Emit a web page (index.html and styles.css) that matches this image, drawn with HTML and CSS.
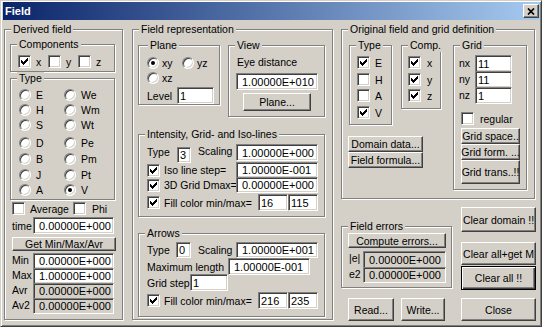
FILE: index.html
```html
<!DOCTYPE html>
<html lang="en">
<head>
<meta charset="utf-8">
<title>Field</title>
<link rel="stylesheet" href="styles.css">
</head>
<body>
<div class="window">
  <div class="titlebar">
    <span class="title">Field</span>
    <span class="closebox"><svg viewBox="0 0 8 7" width="8" height="7"><path d="M1 0.5L7 6.5M7 0.5L1 6.5" stroke="#000" stroke-width="1.7"/></svg></span>
  </div>

  <div class="client">

    <!-- derived field -->
    <div class="grp derived">
      <span class="cap">Derived field</span>
      <div class="grp comps">
        <span class="cap">Components</span>
        <div class="comprow">
          <span class="opt"><span class="cb"><svg viewBox="0 0 7 7" width="7" height="7"><path d="M0 2V5H1V6H2V7H3V6H4V5H5V4H6V3H7V0H6V1H5V2H4V3H3V4H2V3H1V2Z"/></svg></span>x</span>
          <span class="opt"><span class="cb"></span>y</span>
          <span class="opt"><span class="cb"></span>z</span>
        </div>
      </div>
      <div class="grp dtype">
        <span class="cap">Type</span>
        <div class="radiogrid">
          <span class="opt"><span class="rb"></span>E</span>
          <span class="opt"><span class="rb"></span>We</span>
          <span class="opt"><span class="rb"></span>H</span>
          <span class="opt"><span class="rb"></span>Wm</span>
          <span class="opt"><span class="rb"></span>S</span>
          <span class="opt"><span class="rb"></span>Wt</span>
          <span class="opt"><span class="rb"></span>D</span>
          <span class="opt"><span class="rb"></span>Pe</span>
          <span class="opt"><span class="rb"></span>B</span>
          <span class="opt"><span class="rb"></span>Pm</span>
          <span class="opt"><span class="rb"></span>J</span>
          <span class="opt"><span class="rb"></span>Pt</span>
          <span class="opt"><span class="rb"></span>A</span>
          <span class="opt"><span class="rb on"></span>V</span>
        </div>
      </div>
      <div class="avgrow">
        <span class="opt avg"><span class="cb"></span>Average</span>
        <span class="opt phi"><span class="cb"></span>Phi</span>
      </div>
      <div class="vrow time"><span class="vlbl">time</span><span class="edit num dval">0.00000E+000</span></div>
      <button class="btn getmin">Get Min/Max/Avr</button>
      <div class="vrow stat first"><span class="vlbl">Min</span><span class="edit num dval">0.00000E+000</span></div>
      <div class="vrow stat"><span class="vlbl">Max</span><span class="edit num dval">1.00000E+000</span></div>
      <div class="vrow stat"><span class="vlbl">Avr</span><span class="edit num dval ro">0.00000E+000</span></div>
      <div class="vrow stat"><span class="vlbl">Av2</span><span class="edit num dval ro">0.00000E+000</span></div>
    </div>

    <!-- field representation -->
    <div class="grp rep">
      <span class="cap">Field representation</span>
      <div class="reptop">
        <div class="grp plane">
          <span class="cap wide">Plane</span>
          <div class="prow first">
            <span class="opt pl1"><span class="rb on"></span>xy</span>
            <span class="opt"><span class="rb"></span>yz</span>
          </div>
          <div class="prow">
            <span class="opt"><span class="rb"></span>xz</span>
          </div>
          <div class="prow level">
            <span class="lvl">Level</span><span class="edit lvlval">1</span>
          </div>
        </div>
        <div class="grp view">
          <span class="cap">View</span>
          <div class="eyelbl">Eye distance</div>
          <span class="edit num eyeval">1.00000E+010</span>
          <button class="btn planebtn">Plane...</button>
        </div>
      </div>

      <div class="grp intens">
        <span class="cap">Intensity, Grid- and Iso-lines</span>
        <div class="irow typerow">
          <span class="tlbl">Type</span><span class="edit tval">3</span>
          <span class="slbl">Scaling</span><span class="edit num wval h17">1.00000E+000</span>
        </div>
        <div class="irow iso">
          <span class="cb"><svg viewBox="0 0 7 7" width="7" height="7"><path d="M0 2V5H1V6H2V7H3V6H4V5H5V4H6V3H7V0H6V1H5V2H4V3H3V4H2V3H1V2Z"/></svg></span>
          <span class="clbl">Iso line step=</span><span class="edit num wval">1.00000E-001</span>
        </div>
        <div class="irow grid3d">
          <span class="cb"><svg viewBox="0 0 7 7" width="7" height="7"><path d="M0 2V5H1V6H2V7H3V6H4V5H5V4H6V3H7V0H6V1H5V2H4V3H3V4H2V3H1V2Z"/></svg></span>
          <span class="clbl">3D Grid Dmax=</span><span class="edit num wval">0.00000E+000</span>
        </div>
        <div class="irow fill">
          <span class="cb"><svg viewBox="0 0 7 7" width="7" height="7"><path d="M0 2V5H1V6H2V7H3V6H4V5H5V4H6V3H7V0H6V1H5V2H4V3H3V4H2V3H1V2Z"/></svg></span>
          <span class="clbl flbl">Fill color min/max=</span><span class="edit cval">16</span><span class="edit cval">115</span>
        </div>
      </div>

      <div class="grp arrows">
        <span class="cap">Arrows</span>
        <div class="irow atype">
          <span class="tlbl">Type</span><span class="edit tval">0</span>
          <span class="slbl">Scaling</span><span class="edit num wval">1.00000E+001</span>
        </div>
        <div class="irow maxlen">
          <span class="mlbl">Maximum length</span><span class="edit num wval h17">1.00000E-001</span>
        </div>
        <div class="irow gstep">
          <span class="glbl">Grid step</span><span class="edit gval">1</span>
        </div>
        <div class="irow fill afill">
          <span class="cb"><svg viewBox="0 0 7 7" width="7" height="7"><path d="M0 2V5H1V6H2V7H3V6H4V5H5V4H6V3H7V0H6V1H5V2H4V3H3V4H2V3H1V2Z"/></svg></span>
          <span class="clbl flbl">Fill color min/max=</span><span class="edit cval">216</span><span class="edit cval">235</span>
        </div>
      </div>
    </div>

    <!-- original field, errors and buttons -->
    <div class="col3">
      <div class="grp orig">
        <span class="cap">Original field and grid definition</span>
        <div class="origrow">
          <div class="origleft">
            <div class="boxes">
              <div class="grp otype">
                <span class="cap">Type</span>
                <div class="cklist">
                  <span class="opt"><span class="cb"><svg viewBox="0 0 7 7" width="7" height="7"><path d="M0 2V5H1V6H2V7H3V6H4V5H5V4H6V3H7V0H6V1H5V2H4V3H3V4H2V3H1V2Z"/></svg></span>E</span>
                  <span class="opt"><span class="cb"></span>H</span>
                  <span class="opt"><span class="cb"></span>A</span>
                  <span class="opt"><span class="cb"><svg viewBox="0 0 7 7" width="7" height="7"><path d="M0 2V5H1V6H2V7H3V6H4V5H5V4H6V3H7V0H6V1H5V2H4V3H3V4H2V3H1V2Z"/></svg></span>V</span>
                </div>
              </div>
              <div class="grp ocomp">
                <span class="cap">Comp.</span>
                <div class="cklist comp">
                  <span class="opt"><span class="cb"><svg viewBox="0 0 7 7" width="7" height="7"><path d="M0 2V5H1V6H2V7H3V6H4V5H5V4H6V3H7V0H6V1H5V2H4V3H3V4H2V3H1V2Z"/></svg></span>x</span>
                  <span class="opt"><span class="cb"><svg viewBox="0 0 7 7" width="7" height="7"><path d="M0 2V5H1V6H2V7H3V6H4V5H5V4H6V3H7V0H6V1H5V2H4V3H3V4H2V3H1V2Z"/></svg></span>y</span>
                  <span class="opt"><span class="cb"><svg viewBox="0 0 7 7" width="7" height="7"><path d="M0 2V5H1V6H2V7H3V6H4V5H5V4H6V3H7V0H6V1H5V2H4V3H3V4H2V3H1V2Z"/></svg></span>z</span>
                </div>
              </div>
            </div>
            <button class="btn domain">Domain data...</button>
            <button class="btn formula">Field formula...</button>
          </div>
          <div class="grp ogrid">
            <span class="cap">Grid</span>
            <div class="nrow first"><span class="nlbl">nx</span><span class="edit nval">11</span></div>
            <div class="nrow"><span class="nlbl">ny</span><span class="edit nval">11</span></div>
            <div class="nrow"><span class="nlbl">nz</span><span class="edit nval">1</span></div>
            <div class="opt regular"><span class="cb"></span>regular</div>
            <button class="btn gbtn gspace">Grid space..</button>
            <button class="btn gbtn">Grid form. ...</button>
            <button class="btn gbtn gtrans">Grid trans..!!</button>
          </div>
        </div>
      </div>

      <div class="lower">
        <div class="errcol">
          <div class="grp errs">
            <span class="cap">Field errors</span>
            <button class="btn compute">Compute errors...</button>
            <div class="erow first"><span class="elbl">|e|</span><span class="edit num ro eval h17">0.00000E+000</span></div>
            <div class="erow"><span class="elbl">e2</span><span class="edit num ro eval">0.00000E+000</span></div>
          </div>
          <div class="rwrow">
            <button class="btn read">Read...</button>
            <button class="btn write">Write...</button>
          </div>
        </div>
        <div class="btncol">
          <button class="btn cdomain">Clear domain !!</button>
          <button class="btn cgetm">Clear all+get M</button>
          <button class="btn def call">Clear all !!</button>
          <button class="btn closebtn">Close</button>
        </div>
      </div>
    </div>

  </div>
</div>
</body>
</html>
```

FILE: styles.css
```css
html, body {
  margin: 0;
  padding: 0;
  background: #d4d0c8;
}
body {
  font-family: "Liberation Sans", Arial, sans-serif;
  font-size: 10.5px;
  color: #000;
  white-space: nowrap;
}

.window {
  width: 542px;
  height: 327px;
  box-sizing: border-box;
  overflow: hidden;
  background: #d4d0c8;
  border: 1px solid;
  border-color: #d4d0c8 #404040 #404040 #d4d0c8;
  box-shadow: inset 1px 1px #fff, inset -1px -1px #808080;
  padding: 1px 1px 1px 2px;
}

.titlebar {
  height: 18px;
  display: flex;
  align-items: center;
  justify-content: space-between;
  padding-left: 2px;
  background: linear-gradient(to right, #0a246a, #a6caf0);
  color: #fff;
  font-size: 11px;
  font-weight: bold;
}
.closebox {
  width: 16px;
  height: 14px;
  box-sizing: border-box;
  margin-right: 1px;
  display: flex;
  align-items: center;
  justify-content: center;
  background: #d4d0c8;
  border: 1px solid;
  border-color: #fff #404040 #404040 #fff;
  box-shadow: inset -1px -1px #808080;
}

.client {
  display: flex;
  align-items: flex-start;
  padding: 9px 0 0 1px;
}

/* group box */
.grp {
  position: relative;
  box-sizing: border-box;
  border: 1px solid #808080;
  box-shadow: inset 1px 1px #fff, 1px 1px #fff;
  flex: none;
}
.cap {
  position: absolute;
  top: -7px;
  left: 6px;
  padding: 0 2px;
  line-height: 13px;
  background: #d4d0c8;
}
.cap.wide {
  left: 9px;
}

/* controls */
.opt {
  display: flex;
  align-items: center;
  height: 13px;
}
.cb {
  width: 13px;
  height: 13px;
  box-sizing: border-box;
  flex: none;
  background: #fff;
  border: 1px solid;
  border-color: #808080 #fff #fff #808080;
  box-shadow: inset 1px 1px #404040, inset -1px -1px #d4d0c8;
  margin-right: 5px;
}
.cb svg {
  display: block;
  margin: 2px 0 0 2px;
}
.rb {
  width: 12px;
  height: 12px;
  box-sizing: border-box;
  flex: none;
  border-radius: 50%;
  background: #fff;
  border: 1px solid;
  border-color: #808080 #fff #fff #808080;
  box-shadow: inset 1px 1px #404040, inset -1px -1px #d4d0c8;
  margin-right: 5px;
}
.rb.on::after {
  content: "";
  display: block;
  width: 4px;
  height: 4px;
  border-radius: 50%;
  background: #000;
  margin: 3px 0 0 3px;
}
.edit {
  box-sizing: border-box;
  flex: none;
  display: flex;
  align-items: center;
  height: 16px;
  padding-left: 2px;
  font-size: 11px;
  background: #fff;
  border: 1px solid;
  border-color: #808080 #fff #fff #808080;
  box-shadow: inset 1px 1px #404040, inset -1px -1px #d4d0c8;
  overflow: hidden;
}
.edit.num {
  padding-left: 5px;
}
.edit.ro {
  background: #d4d0c8;
}
.edit.h17 {
  height: 17px;
}
.btn {
  display: flex;
  align-items: center;
  justify-content: center;
  box-sizing: border-box;
  flex: none;
  padding: 0;
  margin: 0;
  font: inherit;
  color: #000;
  background: #d4d0c8;
  border: 1px solid;
  border-color: #fff #404040 #404040 #fff;
  box-shadow: inset -1px -1px #808080;
  white-space: nowrap;
}
.btn.def {
  border-color: #000;
  box-shadow: inset 1px 1px #fff, inset -1px -1px #404040, inset -2px -2px #808080;
}

/* derived field */
.derived {
  width: 119px;
  height: 291px;
}
.comps {
  margin: 14px 0 0 5px;
  width: 105px;
  height: 28px;
}
.comprow {
  display: flex;
  padding: 10px 0 0 7px;
}
.comprow .opt {
  width: 30px;
}
.dtype {
  margin: 6px 0 0 5px;
  width: 105px;
  height: 122px;
}
.radiogrid {
  display: grid;
  grid-template-columns: 45px 45px;
  grid-template-rows: 15px 15px 18px 16px 16px 15px 12px;
  padding: 10px 0 0 8px;
}
.radiogrid .opt {
  height: 12px;
}
.avgrow {
  display: flex;
  margin-top: 2px;
  padding-left: 7px;
}
.avgrow .avg {
  width: 61px;
}
.avgrow .phi .cb {
  margin-right: 6px;
}
.vrow {
  display: flex;
  align-items: center;
  padding-left: 7px;
}
.vlbl {
  width: 21px;
  flex: none;
}
.vrow.time {
  margin-top: 2px;
}
.vrow.time .dval {
  height: 17px;
}
.dval {
  width: 81px;
}
.getmin {
  margin: 3px 0 0 7px;
  width: 104px;
  height: 14px;
}
.vrow.stat {
  height: 15px;
  align-items: flex-start;
}
.vrow.stat.first {
  margin-top: 2px;
}
.vrow.stat .vlbl {
  line-height: 15px;
}

/* field representation */
.rep {
  margin-left: 9px;
  width: 201px;
  height: 291px;
}
.reptop {
  display: flex;
  align-items: flex-start;
  margin: 15px 0 0 5px;
}
.plane {
  width: 82px;
  height: 60px;
}
.prow {
  display: flex;
  padding-left: 8px;
  margin-top: 3px;
}
.prow.first {
  margin-top: 11px;
}
.prow .opt {
  height: 12px;
}
.prow .rb {
  margin-right: 3px;
}
.prow .pl1 {
  width: 35px;
}
.prow.level {
  align-items: center;
}
.lvl {
  width: 30px;
}
.lvlval {
  width: 37px;
  height: 17px;
}
.view {
  margin-left: 8px;
  width: 97px;
  height: 72px;
}
.eyelbl {
  margin: 10px 0 0 8px;
  line-height: 13px;
}
.eyeval {
  margin: 4px 0 0 7px;
  width: 82px;
  height: 17px;
}
.planebtn {
  margin: 3px 0 0 14px;
  width: 68px;
  height: 18px;
}

.intens {
  margin: 17px 0 0 5px;
  width: 187px;
  height: 83px;
}
.arrows {
  margin: 16px 0 0 5px;
  width: 187px;
  height: 84px;
}
.irow {
  display: flex;
  align-items: center;
  padding-left: 8px;
  height: 16px;
}
.irow.typerow {
  margin-top: 9px;
  height: 17px;
  align-items: flex-start;
}
.tlbl {
  width: 30px;
  margin-top: 2px;
}
.tval {
  width: 14px;
  margin-top: 3px;
}
.slbl {
  width: 38px;
  margin: 1px 0 0 7px;
}
.wval {
  width: 82px;
}
.irow.iso {
  margin-top: 1px;
}
.irow .cb {
  margin-right: 4px;
}
.clbl {
  width: 72px;
  flex: none;
}
.irow.grid3d {
  margin-top: -1px;
}
.irow.fill {
  margin-top: 1px;
  height: 17px;
}
.clbl.flbl {
  width: 94px;
}
.cval {
  width: 30px;
  height: 17px;
}

.irow.atype {
  margin-top: 8px;
}
.atype .tlbl {
  width: 29px;
  margin-top: 0;
}
.atype .tval {
  width: 15px;
  margin-top: 0;
}
.atype .slbl {
  margin-top: 0;
}
.irow.maxlen {
  height: 17px;
}
.mlbl {
  width: 81px;
  flex: none;
}
.irow.gstep {
  margin-top: -1px;
  height: 17px;
}
.glbl {
  width: 43px;
  flex: none;
}
.gval {
  width: 38px;
  height: 17px;
}

/* original field */
.col3 {
  margin-left: 8px;
  width: 194px;
}
.orig {
  width: 194px;
  height: 170px;
}
.origrow {
  display: flex;
  align-items: flex-start;
  margin-top: 15px;
}
.origleft {
  margin-left: 6px;
  width: 98px;
}
.boxes {
  display: flex;
  align-items: flex-start;
}
.otype {
  margin-left: 1px;
  width: 43px;
  height: 80px;
}
.ocomp {
  margin-left: 9px;
  width: 40px;
  height: 64px;
}
.cklist {
  display: grid;
  grid-template-rows: 17px 16px 17px 13px;
  padding: 10px 0 0 7px;
}
.cklist.comp {
  padding-left: 6px;
}
.cklist.comp .cb {
  margin-right: 6px;
}
.domain {
  margin-top: 11px;
  width: 75px;
  height: 16px;
}
.formula {
  width: 75px;
  height: 16px;
}
.ogrid {
  margin-left: 7px;
  width: 74px;
  height: 145px;
}
.nrow {
  display: flex;
  align-items: flex-start;
  height: 16px;
  padding-left: 5px;
}
.nrow.first {
  margin-top: 9px;
}
.nlbl {
  width: 16px;
  line-height: 16px;
}
.nval {
  width: 37px;
  height: 17px;
}
.regular {
  margin: 9px 0 0 7px;
}
.regular .cb {
  margin-right: 6px;
}
.gbtn {
  margin-left: 7px;
  width: 59px;
  height: 16px;
}
.gspace {
  margin-top: 3px;
}
.gbtn.gtrans {
  height: 24px;
}

/* errors and buttons */
.lower {
  display: flex;
  align-items: flex-start;
}
.errcol {
  width: 111px;
}
.errs {
  margin-top: 27px;
  width: 111px;
  height: 62px;
}
.compute {
  margin: 6px 0 0 6px;
  width: 98px;
  height: 15px;
}
.erow {
  display: flex;
  align-items: flex-start;
  height: 16px;
  padding-left: 7px;
}
.erow.first {
  margin-top: 3px;
}
.elbl {
  width: 14px;
  line-height: 15px;
}
.eval {
  width: 83px;
}
.rwrow {
  display: flex;
  margin-top: 10px;
}
.read {
  margin-left: 7px;
  width: 46px;
  height: 23px;
}
.write {
  margin-left: 7px;
  width: 44px;
  height: 23px;
}
.btncol {
  margin-left: 9px;
  width: 75px;
}
.btncol .btn {
  width: 75px;
  height: 23px;
}
.btncol .cdomain {
  margin-top: 8px;
  height: 25px;
}
.btncol .cgetm {
  margin-top: 10px;
}
.btncol .call {
  margin-top: 1px;
  height: 24px;
}
.btncol .closebtn {
  margin-top: 8px;
}
```
